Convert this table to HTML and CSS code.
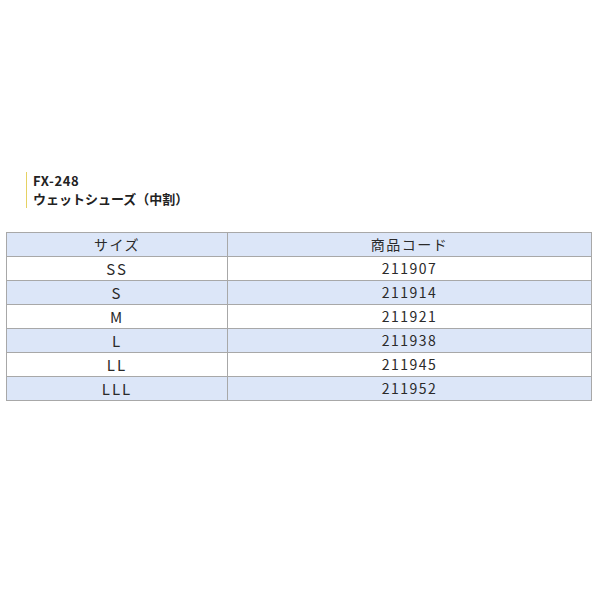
FILE: index.html
```html
<!DOCTYPE html>
<html lang="ja">
<head>
<meta charset="utf-8">
<link rel="stylesheet" href="styles.css">
</head>
<body>
<div class="title">
  <div class="model">FX-248</div>
  <div class="name">ウェットシューズ（中割）</div>
</div>
<table class="sizes">
  <tr class="head"><td class="c1">サイズ</td><td class="c2">商品コード</td></tr>
  <tr><td class="size">SS</td><td>211907</td></tr>
  <tr class="alt"><td class="size">S</td><td>211914</td></tr>
  <tr><td class="size">M</td><td>211921</td></tr>
  <tr class="alt"><td class="size">L</td><td>211938</td></tr>
  <tr><td class="size">LL</td><td>211945</td></tr>
  <tr class="alt"><td class="size">LLL</td><td>211952</td></tr>
</table>
</body>
</html>
```
FILE: styles.css
```css
html, body {
  margin: 0;
  padding: 0;
  background: #ffffff;
}
body {
  font-family: "Noto Sans CJK JP", "DejaVu Sans", sans-serif;
  color: #222222;
}
.title {
  margin: 172px 0 0 26px;
  border-left: 1px solid #e6d263;
  padding: 0 0 0 6px;
  font-size: 13px;
  font-weight: bold;
  line-height: 18px;
  color: #222222;
  width: 220px;
}
.model {
  letter-spacing: 0.6px;
}
.sizes {
  margin: 24px 0 0 6px;
  width: 586px;
  border-collapse: collapse;
  font-size: 14px;
  color: #2a2a2a;
}
.sizes td {
  border: 1px solid #a8a8a8;
  height: 23px;
  padding: 0;
  text-align: center;
  vertical-align: middle;
  line-height: 23px;
  letter-spacing: 1.5px;
}
.sizes .c1 {
  width: 220px;
}
.sizes td.size {
  letter-spacing: 2px;
  font-size: 15px;
}
.sizes .head td,
.sizes .alt td {
  background: #dce6f8;
}
```
